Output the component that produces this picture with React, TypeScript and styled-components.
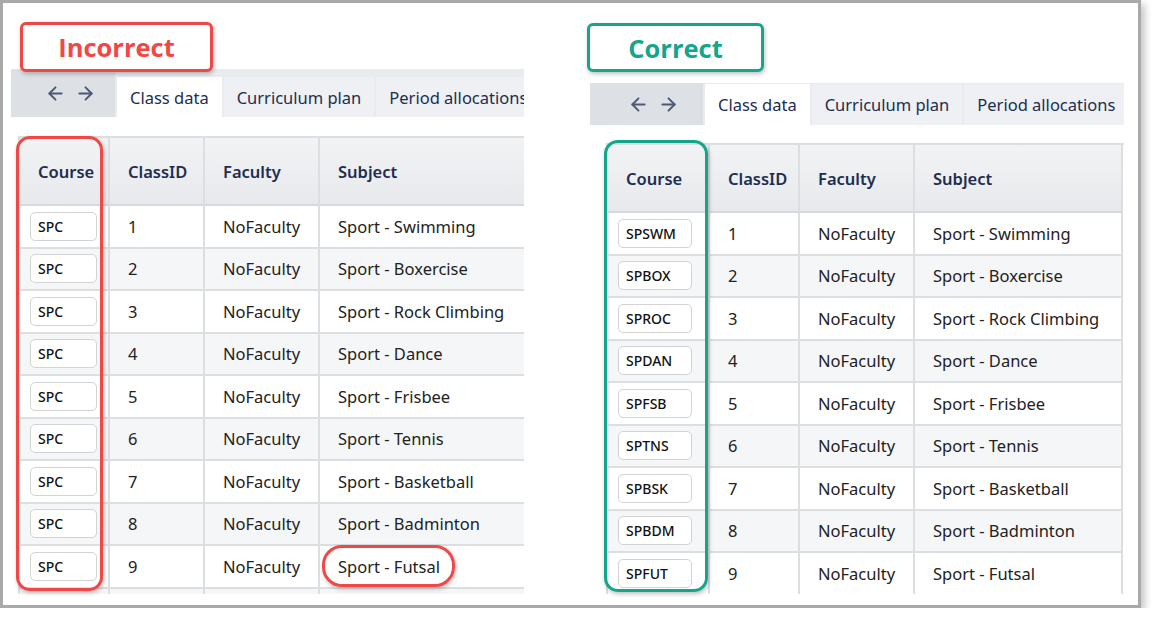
import React from "react";
import styled, { createGlobalStyle } from "styled-components";
import { ArrowLeft, ArrowRight } from "lucide-react";

const Global = createGlobalStyle`
  html, body { margin: 0; padding: 0; background: #ffffff; }
  body { font-family: "Noto Sans", "Open Sans", sans-serif; }
  * { box-sizing: border-box; }
`;

const Frame = styled.div`
  width: 1141px;
  height: 608px;
  border: 3px solid #a9a9a9;
  box-shadow: 4px 4px 7px rgba(0, 0, 0, 0.22);
  display: flex;
  gap: 63px;
  background: #fff;
  overflow: hidden;
`;

const Panel = styled.div<{ $w: number }>`
  position: relative;
  width: ${(p) => p.$w}px;
  display: flex;
  flex-direction: column;
  flex: none;
`;

const Label = styled.div<{ $color: string; $w: number; $h: number; $ml: number; $mt: number }>`
  position: relative;
  z-index: 2;
  width: ${(p) => p.$w}px;
  height: ${(p) => p.$h}px;
  margin-left: ${(p) => p.$ml}px;
  margin-top: ${(p) => p.$mt}px;
  border: 3px solid ${(p) => p.$color};
  border-radius: 6px;
  background: #fff;
  box-shadow: 1px 2px 4px rgba(0, 0, 0, 0.25);
  color: ${(p) => p.$color};
  font-family: "Open Sans", "Noto Sans", sans-serif;
  font-weight: 700;
  font-size: 25.5px;
  display: flex;
  align-items: center;
  justify-content: center;
  flex: none;
`;

const TabBar = styled.div<{ $ml: number; $mt: number; $pt: number; $h: number }>`
  margin-left: ${(p) => p.$ml}px;
  margin-top: ${(p) => p.$mt}px;
  padding-top: ${(p) => p.$pt}px;
  height: ${(p) => p.$h}px;
  background: #e9ecef;
  display: flex;
  gap: 2px;
  overflow: hidden;
  flex: none;
`;

const NavWrap = styled.div<{ $pt: number }>`
  display: flex;
  margin-top: -${(p) => p.$pt}px;
`;

const Nav = styled.div<{ $w: number }>`
  width: ${(p) => p.$w}px;
  background: #dde1e6;
  display: flex;
  align-items: center;
  justify-content: center;
  padding-left: 14px;
  gap: 9px;
  color: #4b5a73;
  flex: none;
`;

const Tab = styled.div<{ $active?: boolean }>`
  flex: none;
  display: flex;
  align-items: center;
  padding: 0 13px;
  background: ${(p) => (p.$active ? "#ffffff" : "#eef0f3")};
  color: #1d2d4f;
  font-size: 16.5px;
  white-space: nowrap;
`;

const TableView = styled.div<{ $ml: number; $mt: number; $h: number; $w: number }>`
  margin-left: ${(p) => p.$ml}px;
  margin-top: ${(p) => p.$mt}px;
  height: ${(p) => p.$h}px;
  width: ${(p) => p.$w}px;
  overflow: hidden;
  flex: none;
`;

const Grid = styled.div<{ $cols: string }>`
  display: grid;
  grid-template-columns: ${(p) => p.$cols};
  border-top: 2px solid #dcdfe2;
  border-left: 2px solid #dcdfe2;
`;

const HeadCell = styled.div`
  height: 68px;
  display: flex;
  align-items: center;
  padding-left: 18px;
  background: linear-gradient(#f2f3f5, #e7e9ec);
  border-right: 2px solid #dcdfe2;
  border-bottom: 2px solid #d6d9dd;
  color: #1d2d4f;
  font-weight: 600;
  font-size: 16.5px;
  white-space: nowrap;
`;

const Cell = styled.div<{ $alt: boolean }>`
  height: 42.5px;
  display: flex;
  align-items: center;
  padding-left: 18px;
  background: ${(p) => (p.$alt ? "#f5f6f8" : "#ffffff")};
  border-right: 2px solid #dcdfe2;
  border-bottom: 2px solid #dcdfe2;
  color: #222;
  font-size: 16.5px;
  white-space: nowrap;
`;

const CodeCell = styled(Cell)`
  padding-left: 10px;
`;

const Code = styled.div<{ $w: number }>`
  width: ${(p) => p.$w}px;
  height: 29px;
  border: 1px solid #d3d3d3;
  border-radius: 5px;
  background: #fff;
  display: flex;
  align-items: center;
  padding-left: 7px;
  font-size: 14px;
  font-weight: 500;
  color: #111;
`;

const Ring = styled.div<{ $color: string; $x: number; $y: number; $w: number; $h: number; $r: number }>`
  position: absolute;
  left: ${(p) => p.$x}px;
  top: ${(p) => p.$y}px;
  width: ${(p) => p.$w}px;
  height: ${(p) => p.$h}px;
  border: 3px solid ${(p) => p.$color};
  border-radius: ${(p) => p.$r}px;
  box-shadow: 1px 2px 4px rgba(0, 0, 0, 0.25);
  pointer-events: none;
  z-index: 3;
`;

const subjects = [
  "Sport - Swimming",
  "Sport - Boxercise",
  "Sport - Rock Climbing",
  "Sport - Dance",
  "Sport - Frisbee",
  "Sport - Tennis",
  "Sport - Basketball",
  "Sport - Badminton",
  "Sport - Futsal",
];
const goodCodes = ["SPSWM", "SPBOX", "SPROC", "SPDAN", "SPFSB", "SPTNS", "SPBSK", "SPBDM", "SPFUT"];

type TableProps = { codes: string[]; cols: string; codeW: number };

function DataTable({ codes, cols, codeW }: TableProps) {
  const rows = [...subjects.map((s, i) => ({ s, c: codes[i], id: String(i + 1) })), { s: "", c: "", id: "" }];
  return (
    <Grid $cols={cols}>
      <HeadCell>Course</HeadCell>
      <HeadCell>ClassID</HeadCell>
      <HeadCell>Faculty</HeadCell>
      <HeadCell>Subject</HeadCell>
      {rows.map((r, i) => {
        const alt = i % 2 === 1;
        return (
          <React.Fragment key={i}>
            <CodeCell $alt={alt}>{r.c && <Code $w={codeW}>{r.c}</Code>}</CodeCell>
            <Cell $alt={alt}>{r.id}</Cell>
            <Cell $alt={alt}>{r.id && "NoFaculty"}</Cell>
            <Cell $alt={alt}>{r.s}</Cell>
          </React.Fragment>
        );
      })}
    </Grid>
  );
}

function Tabs({ navW, ml, mt, pt, h }: { navW: number; ml: number; mt: number; pt: number; h: number }) {
  return (
    <TabBar $ml={ml} $mt={mt} $pt={pt} $h={h}>
      <NavWrap $pt={pt}>
        <Nav $w={navW}>
          <ArrowLeft size={21} strokeWidth={2.2} />
          <ArrowRight size={21} strokeWidth={2.2} />
        </Nav>
      </NavWrap>
      <Tab $active>Class data</Tab>
      <Tab>Curriculum plan</Tab>
      <Tab>Period allocations</Tab>
    </TabBar>
  );
}

export default function App() {
  return (
    <>
      <Global />
      <Frame>
        <Panel $w={521}>
          <Label $color="#f04747" $w={193} $h={50} $ml={17} $mt={19}>
            Incorrect
          </Label>
          <Tabs navW={104} ml={8} mt={-3} pt={8} h={48} />
          <TableView $ml={15} $mt={19} $h={458} $w={506}>
            <DataTable codes={Array(9).fill("SPC")} cols="90px 95px 115px 260px" codeW={67} />
          </TableView>
          <Ring $color="#f04747" $x={13} $y={133} $w={87} $h={455} $r={14} />
          <Ring $color="#f04747" $x={319} $y={542} $w={133} $h={42} $r={20} />
        </Panel>
        <Panel $w={537}>
          <Label $color="#13a68a" $w={177} $h={49} $ml={0} $mt={20}>
            Correct
          </Label>
          <Tabs navW={113} ml={3} mt={11} pt={1} h={42} />
          <TableView $ml={19} $mt={18} $h={451} $w={518}>
            <DataTable codes={goodCodes} cols="102px 90px 115px 208px" codeW={74} />
          </TableView>
          <Ring $color="#13a68a" $x={17} $y={137} $w={104} $h={452} $r={14} />
        </Panel>
      </Frame>
    </>
  );
}
